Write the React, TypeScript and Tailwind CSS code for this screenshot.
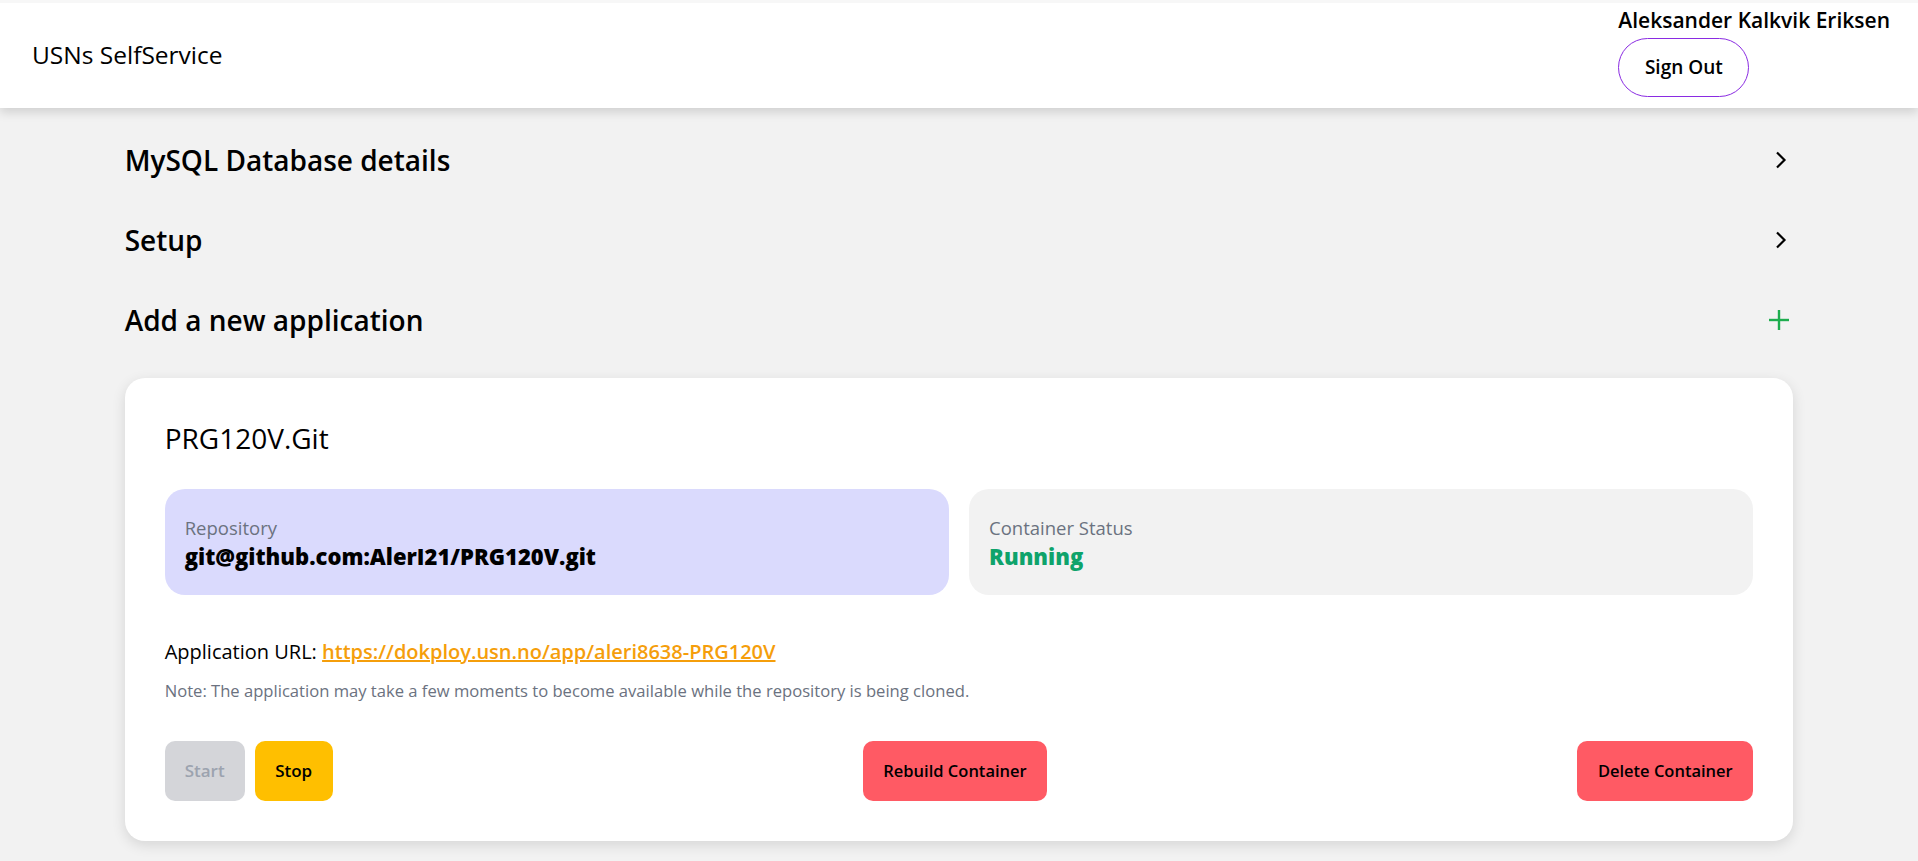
import React from 'react';

const font = { fontFamily: '"Open Sans", "Noto Sans", sans-serif' };

const Chevron: React.FC = () => (
  <svg width="12" height="18" viewBox="0 0 12 18" fill="none">
    <polyline points="2,1.5 9.5,9 2,16.5" stroke="#000" strokeWidth="2.2" />
  </svg>
);

const Plus: React.FC = () => (
  <svg width="20" height="20" viewBox="0 0 20 20" fill="none">
    <line x1="10" y1="0" x2="10" y2="20" stroke="#1ead4e" strokeWidth="2.4" />
    <line x1="0" y1="10" x2="20" y2="10" stroke="#1ead4e" strokeWidth="2.4" />
  </svg>
);

const Section: React.FC<{ title: string; icon: React.ReactNode; iconPad: string }> = ({ title, icon, iconPad }) => (
  <div className="flex items-center justify-between h-[80px] cursor-pointer">
    <h2 className="text-[28px] font-semibold text-black">{title}</h2>
    <div className={iconPad}>{icon}</div>
  </div>
);

const App: React.FC = () => {
  return (
    <div className="min-h-screen bg-[#f2f2f2] text-black" style={font}>
      {/* Header */}
      <header className="bg-white shadow-[0_4px_10px_rgba(0,0,0,0.15)] flex justify-between items-center pl-8 pr-7 h-[108px] border-t-[3px] border-[#f7f7f7]">
        <h1 className="text-[24.5px] font-medium">USNs SelfService</h1>
        <div className="flex flex-col items-start self-start pt-[3px]">
          <span className="text-[21px] font-semibold leading-7">Aleksander Kalkvik Eriksen</span>
          <button className="mt-[4px] h-[59px] w-[131px] rounded-full border border-[#8a2be2] text-[19px] font-semibold bg-white">
            Sign Out
          </button>
        </div>
      </header>

      <main className="w-[87%] mx-auto pt-[12px] pb-10">
        <Section title="MySQL Database details" icon={<Chevron />} iconPad="pr-[6px]" />
        <Section title="Setup" icon={<Chevron />} iconPad="pr-[6px]" />
        <Section title="Add a new application" icon={<Plus />} iconPad="pr-[4px]" />

        {/* Application card */}
        <div className="mt-[18px] bg-white rounded-[20px] shadow-[0_4px_14px_rgba(0,0,0,0.12)] p-10">
          <h3 className="text-[28px] font-medium leading-[40px]">PRG120V.Git</h3>

          <div className="grid grid-cols-2 gap-5 mt-[31px]">
            <div className="bg-[#dadafd] rounded-[20px] px-5 py-[25px]">
              <div className="text-[18.5px] text-[#6b7280] leading-7">Repository</div>
              <div className="text-[22px] font-extrabold leading-7">git@github.com:AlerI21/PRG120V.git</div>
            </div>
            <div className="bg-[#f2f2f2] rounded-[20px] px-5 py-[25px]">
              <div className="text-[18.5px] text-[#6b7280] leading-7">Container Status</div>
              <div className="text-[22px] font-extrabold leading-7 text-[#0ea36b]">Running</div>
            </div>
          </div>

          <p className="mt-[43px] text-[20px] leading-7">
            Application URL:{' '}
            <a href="#" className="text-[#f59e0b] font-semibold underline">
              https://dokploy.usn.no/app/aleri8638-PRG120V
            </a>
          </p>
          <p className="mt-[13px] text-[16.6px] text-[#6b7280] leading-6">
            Note: The application may take a few moments to become available while the repository is being cloned.
          </p>

          <div className="flex justify-between items-center mt-[38px]">
            <div className="flex gap-[10px]">
              <button disabled className="h-[60px] w-[80px] rounded-[10px] bg-[#d4d5d9] text-[#9ca3af] text-[17px] font-semibold">
                Start
              </button>
              <button className="h-[60px] w-[78px] rounded-[10px] bg-[#ffbf00] text-[17px] font-semibold">
                Stop
              </button>
            </div>
            <button className="h-[60px] w-[184px] rounded-[10px] bg-[#ff5a64] text-[16.5px] font-semibold">
              Rebuild Container
            </button>
            <button className="h-[60px] w-[176px] rounded-[10px] bg-[#ff5a64] text-[16.5px] font-semibold">
              Delete Container
            </button>
          </div>
        </div>
      </main>
    </div>
  );
};

export default App;
